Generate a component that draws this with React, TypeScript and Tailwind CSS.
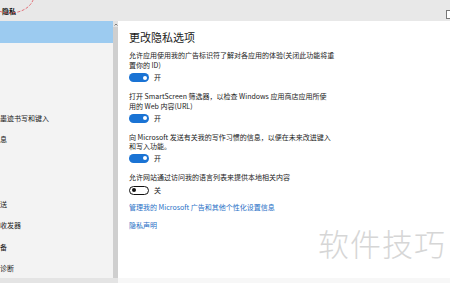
import React from "react";

const navItems = [
  "常规",
  "位置",
  "相机",
  "麦克风",
  "语音、墨迹书写和键入",
  "帐户信息",
  "联系人",
  "日历",
  "消息传送",
  "无线电收发器",
  "其他设备",
  "反馈和诊断",
];

function Toggle({ on, label }: { on: boolean; label: string }) {
  return (
    <div className="flex items-center">
      {on ? (
        <div className="w-[20px] h-[9px] rounded-full bg-[#1a73d4] flex items-center justify-end pr-[2px]">
          <div className="w-[4px] h-[4px] rounded-full bg-white" />
        </div>
      ) : (
        <div className="w-[20px] h-[9px] rounded-full border-[1.3px] border-[#111] bg-white flex items-center pl-[2px]">
          <div className="w-[4px] h-[4px] rounded-full bg-[#111]" />
        </div>
      )}
      <span className="ml-[5px] text-[7px] leading-[9px] text-[#1a1a1a]">{label}</span>
    </div>
  );
}

export default function App() {
  return (
    <div className="relative w-[450px] h-[283px] overflow-hidden bg-white font-['Noto_Sans_CJK_SC','Liberation_Sans',sans-serif] flex flex-col">
      {/* title bar */}
      <div className="h-[21px] shrink-0 bg-[#e8e8e8] flex items-center overflow-hidden">
        <span className="ml-[2px] mt-[2px] text-[7px] font-bold text-[#111]">隐私</span>
        <div className="ml-auto mr-[-8px] mt-[8px] w-[12px] h-[9px] border border-[#777] bg-white" />
      </div>

      <div className="flex flex-1 min-h-0">
        {/* left nav, scrolled sideways */}
        <div className="w-[113px] shrink-0 bg-[#f3f3f3] overflow-hidden">
          {navItems.map((item, i) => (
            <div
              key={item}
              className={`h-[21.5px] flex items-center whitespace-nowrap ${i === 0 ? "bg-[#9ccbf0]" : ""}`}
            >
              <span className="-ml-[21px] text-[7px] text-[#1a1a1a]">{item}</span>
            </div>
          ))}
        </div>

        {/* scrollbar */}
        <div className="w-[5px] shrink-0 bg-[#cfcfcf] flex flex-col items-center">
          <div className="w-full h-[6px] bg-[#e2e2e2] flex items-center justify-center">
            <svg width="4" height="3" viewBox="0 0 4 3">
              <path d="M0.5 2.5 L2 1 L3.5 2.5" stroke="#666" strokeWidth="0.8" fill="none" />
            </svg>
          </div>
        </div>

        {/* main content */}
        <main className="flex-1 bg-white pl-[11px] text-[#1a1a1a] whitespace-nowrap">
          <h1 className="mt-[9px] text-[11px] leading-[14px]">更改隐私选项</h1>

          <p className="mt-[7px] text-[7px] leading-[9.5px]">
            允许应用使用我的广告标识符了解对各应用的体验(关闭此功能将重
            <br />
            置你的 ID)
          </p>
          <div className="mt-[3px]">
            <Toggle on label="开" />
          </div>

          <p className="mt-[10px] text-[7px] leading-[9.5px]">
            打开 SmartScreen 筛选器，以检查 Windows 应用商店应用所使
            <br />
            用的 Web 内容(URL)
          </p>
          <div className="mt-[2.5px]">
            <Toggle on label="开" />
          </div>

          <p className="mt-[10px] text-[7px] leading-[9.5px]">
            向 Microsoft 发送有关我的写作习惯的信息，以便在未来改进键入
            <br />
            和写入功能。
          </p>
          <div className="mt-[2px]">
            <Toggle on label="开" />
          </div>

          <p className="mt-[10px] text-[7px] leading-[9.5px]">允许网站通过访问我的语言列表来提供本地相关内容</p>
          <div className="mt-[3.5px]">
            <Toggle on={false} label="关" />
          </div>

          <a className="block mt-[8.5px] text-[7px] leading-[9.5px] text-[#1f6fc6]">
            管理我的 Microsoft 广告和其他个性化设置信息
          </a>
          <a className="block mt-[8px] text-[7px] leading-[9.5px] text-[#1f6fc6]">隐私声明</a>
        </main>
      </div>

      <div className="h-[5px] shrink-0 flex">
        <div className="w-[118px] bg-[#e4e4e4]" />
        <div className="flex-1 bg-[#f7f7f7]" />
      </div>

      {/* red annotation circle */}
      <svg className="absolute left-0 top-0" width="60" height="30" viewBox="0 0 60 30">
        <ellipse cx="10" cy="-5" rx="24" ry="18" fill="none" stroke="#e0505a" strokeWidth="0.8" strokeDasharray="3 1.5" />
      </svg>

      {/* watermark */}
      <div className="absolute left-[318px] top-[224px] text-[31px] leading-[38px] font-light tracking-[1px] text-[#d6d6d6]">
        软件技巧
      </div>
    </div>
  );
}
